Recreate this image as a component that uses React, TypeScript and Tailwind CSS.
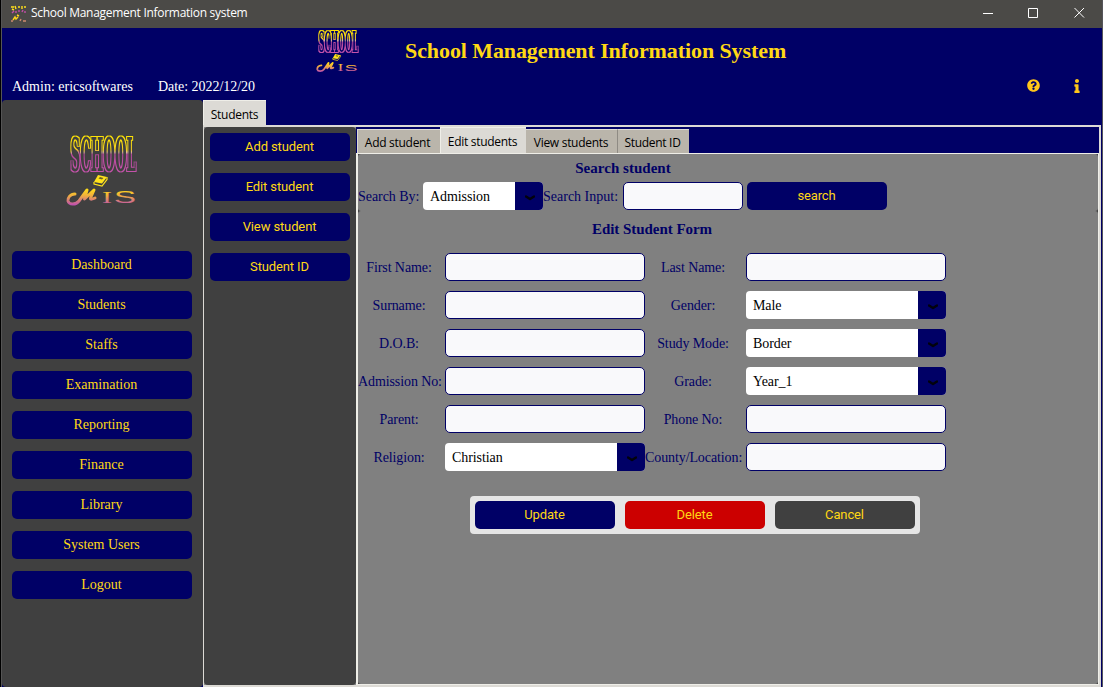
import { FaInfo, FaQuestionCircle } from 'react-icons/fa';

const menu = ['Dashboard', 'Students', 'Staffs', 'Examination', 'Reporting', 'Finance', 'Library', 'System Users', 'Logout'];
const studentActions = ['Add student', 'Edit student', 'View student', 'Student ID'];
const serif = "font-['Liberation_Serif',serif]";
const roboto = "font-['Roboto',sans-serif] text-[13px] tracking-[-0.12px]";
const sans = "font-['Open_Sans',sans-serif] text-[12px] tracking-[-0.29px]";

function Logo({ className, id, outline }: { className: string; id: string; outline: number }) {
  return (
    <svg viewBox="0 0 72 74" className={`overflow-visible ${className}`} aria-label="School MIS">
      <defs>
        <linearGradient id={`${id}-top`} gradientUnits="userSpaceOnUse" x1="0" y1="2" x2="0" y2="39">
          <stop offset="0" stopColor="#ffe600" />
          <stop offset="0.43" stopColor="#f5d020" />
          <stop offset="0.5" stopColor="#b8489c" />
          <stop offset="1" stopColor="#c553ab" />
        </linearGradient>
        <linearGradient id={`${id}-base`} gradientUnits="userSpaceOnUse" x1="0" y1="56" x2="0" y2="72">
          <stop offset="0" stopColor="#ffdf18" />
          <stop offset="0.4" stopColor="#f0b03c" />
          <stop offset="1" stopColor="#bf4fb0" />
        </linearGradient>
        <filter id={`${id}-outline`} x="-5%" y="-10%" width="110%" height="120%" colorInterpolationFilters="sRGB">
          <feMorphology in="SourceGraphic" operator="dilate" radius={outline} result="wide" />
          <feComposite in="wide" in2="SourceGraphic" operator="out" />
        </filter>
      </defs>
      <text x="4.500" y="38" fontSize="47" fontWeight="bold" fontFamily="DejaVu Serif, serif" textLength="65.500" lengthAdjust="spacingAndGlyphs" fill={`url(#${id}-top)`} filter={`url(#${id}-outline)`}>SCHOOL</text>
      <path d="M28 49 L32 42 L41 44 L36 50.500 Z" fill="#ffe31a" />
      <path d="M28 49 V51 L36 53 L41 46.500 V44" fill="none" stroke="#ffe31a" strokeWidth="1.2" />
      <path d="M32.500 45.500 L34 44 L37.500 45 L36 46.500Z" fill="#6d6420" />
      <path d="M9 61 C4 61 1.500 65 2 68 C3 72 10 72 13 68 L21 57 L18.500 66 L28 57 L24.500 65 C24 67 27 66 29 65" fill="none" stroke={`url(#${id}-base)`} strokeWidth="3" strokeLinecap="round" strokeLinejoin="round" />
      <text x="36" y="70" fontSize="17.500" fontFamily="Liberation Serif, serif" textLength="10" lengthAdjust="spacingAndGlyphs" fill={`url(#${id}-base)`}>I</text>
      <text x="48" y="70" fontSize="16.500" fontFamily="Liberation Sans, sans-serif" textLength="22" lengthAdjust="spacingAndGlyphs" fill={`url(#${id}-base)`}>S</text>
    </svg>
  );
}

function WindowIcon() {
  return (
    <svg viewBox="0 0 16 18" className="ml-2 h-[18px] w-4" fill="none" strokeWidth="1.4">
      <path d="M1 2 H4 M5 1 L6 4 M8 2 H10 M12 1 V4 M14 2 H16 M2 4 L4 5" stroke="#ffe01c" />
      <path d="M2 8 L4 6 M6 6 V8 M9 5 V7 M12 7 L13 5 M15 6 V8" stroke="#c14fa6" />
      <path d="M7 10 L9 11 M3 15 L5 12 L6 14 L8 12" stroke="#ffd51c" />
      <path d="M1 16 H3 M10 16 L11 14 M13 16 H16" stroke="#d08a70" />
    </svg>
  );
}

function Select({ value, width }: { value: string; width: string }) {
  return (
    <div className={`flex h-7 overflow-hidden rounded-[4px] bg-white ${width}`}>
      <span className="flex-1 pl-[7px] leading-[29px] tracking-[-0.08px] text-black">{value}</span>
      <span className="flex w-7 items-center justify-center bg-[#000066]">
        <svg viewBox="0 0 10 6" className="ml-px mt-[3px] h-1.5 w-2.5">
          <path d="M1 1.500 L5 4 L9 1.500" fill="none" stroke="#02020c" strokeWidth="2.4" strokeLinecap="round" strokeLinejoin="round" />
        </svg>
      </span>
    </div>
  );
}

function Input({ width }: { width: string }) {
  return <input className={`block h-7 rounded-[5px] border border-[#000066] bg-[#f9f9fb] px-2 outline-none ${width}`} />;
}

function Field({ label, value }: { label: string; value?: string }) {
  return (
    <>
      <label className="whitespace-nowrap pr-[5px] text-center leading-[29px] tracking-[-0.1px] text-[#000066]">{label}</label>
      {value ? <Select value={value} width="w-[200px]" /> : <Input width="w-[200px]" />}
    </>
  );
}

function NavButton({ label, className }: { label: string; className: string }) {
  return <button className={`block h-7 shrink-0 rounded-[5px] pb-px pr-px text-center leading-[27px] text-[#ffd814] ${className}`}>{label}</button>;
}

export default function App() {
  return (
    <div className={`flex h-[687px] w-[1103px] overflow-hidden border-r border-[#55555a] bg-[#000066] text-[14px] ${serif}`}>
      <div className="w-0.5 shrink-0 border-r border-[#555] bg-black" />
      <div className="flex min-w-0 flex-1 flex-col">
        <header className={`flex h-7 shrink-0 items-center bg-[#4b4a47] text-white ${sans}`}>
          <WindowIcon />
          <span className="ml-[5px] mt-[-2px] whitespace-nowrap">School Management Information system</span>
          <svg viewBox="0 0 102 12" className="ml-auto mr-[17px] mt-[-3px] h-3 w-[102px]" fill="none" stroke="white">
            <path d="M0 6.500 H10 M45.500 1.500 H54.500 V10.500 H45.500 Z M91.500 1 L101 10.500 M101 1 L91.500 10.500" />
          </svg>
        </header>
        <div className="flex h-[72px] shrink-0 flex-col">
          <div className="flex h-[46px] items-center">
            <Logo id="head" outline={1.65} className="ml-[314px] h-[44px] w-[43px]" />
            <h1 className="ml-[46px] mt-[-2px] whitespace-nowrap text-[22px] font-bold tracking-[-0.09px] text-[#ffd814]">School Management Information System</h1>
          </div>
          <div className="flex h-6 items-center pl-[10px] text-white">
            <span className="w-[146px] whitespace-nowrap">Admin: ericsoftwares</span>
            <span className="tracking-[-0.04px]">Date: 2022/12/20</span>
            <FaQuestionCircle className="mb-[2px] ml-auto size-[13px] text-[#ffc61a]" />
            <FaInfo className="mb-px ml-[30px] mr-[18px] h-[14px] w-[14px] text-[#ffc61a]" />
          </div>
        </div>
        <div className="flex min-h-0 flex-1">
          <aside className="flex w-[201px] shrink-0 flex-col items-center rounded-[4px] bg-[#404040] pr-px">
            <Logo id="side" outline={1} className="mt-[33px] h-[74px] w-[72px] shrink-0" />
            <nav className="mt-[44px] flex flex-col gap-3">
              {menu.map((m) => <NavButton key={m} label={m} className="w-[180px] bg-[#000066]" />)}
            </nav>
          </aside>
          <main className="flex min-w-0 flex-1 flex-col">
            <div className={`h-[25px] w-[63px] border-l border-t border-[#efeee8] bg-[#dcdad5] pr-px text-center leading-[27px] text-black ${sans}`}>Students</div>
            <div className="mr-px flex min-h-0 flex-1 border-2 border-l border-[#dcdad5] bg-[#000066]">
              <div className="flex w-[152px] shrink-0 bg-[#8a8a8a]">
                <div className={`flex flex-1 flex-col items-center gap-3 rounded-[4px] bg-[#404040] pt-[6px] ${roboto}`}>
                  {studentActions.map((a) => <NavButton key={a} label={a} className="w-[140px] bg-[#000066]" />)}
                </div>
              </div>
              <section className="flex min-w-0 flex-1 flex-col">
                <div className={`flex h-[26px] items-end pl-px text-center leading-[25px] text-black ${sans}`}>
                  <div className="h-6 w-[83px] border-l border-t border-[#dcdad5] bg-[#bab5ab] pr-[3px]">Add student</div>
                  <div className="h-[26px] w-[86px] border-l border-t border-[#efeee8] bg-[#dcdad5] pr-[2px] leading-[28px]">Edit students</div>
                  <div className="h-6 w-[91px] border-t border-[#dcdad5] bg-[#bab5ab] pr-px">View students</div>
                  <div className="h-6 w-[72px] border-l border-t border-[#dcdad5] border-l-[#8f8b84] bg-[#bab5ab] pr-[2px]">Student ID</div>
                </div>
                <div className="flex min-h-0 flex-1 flex-col border border-l-2 border-[#efeee8] bg-[#404040] text-[#000066]">
                  <div className="h-[57px] shrink-0 rounded-[3px] bg-[#808080] pt-1">
                    <h2 className="w-[530px] text-center text-[15px] font-bold leading-5 tracking-[0.03px]">Search student</h2>
                    <div className="mt-[4px] flex h-7 items-center">
                      <label className="w-[65px] whitespace-nowrap tracking-[-0.05px]">Search By:</label>
                      <Select value="Admission" width="w-[120px]" />
                      <label className="w-[80px] whitespace-nowrap">Search Input:</label>
                      <Input width="w-[120px]" />
                      <NavButton label="search" className={`ml-1 w-[140px] bg-[#000066] ${roboto}`} />
                    </div>
                  </div>
                  <div className="min-h-0 flex-1 rounded-[3px] bg-[#808080] pt-2">
                    <h2 className="w-[588px] text-center text-[15px] font-bold leading-5 tracking-[-0.05px]">Edit Student Form</h2>
                    <div className="mt-[14px] grid auto-rows-[28px] grid-cols-[87px_200px_101px_200px] gap-y-[10px]">
                      <Field label="First Name:" /><Field label="Last Name:" />
                      <Field label="Surname:" /><Field label="Gender:" value="Male" />
                      <Field label="D.O.B:" /><Field label="Study Mode:" value="Border" />
                      <Field label="Admission No:" /><Field label="Grade:" value="Year_1" />
                      <Field label="Parent:" /><Field label="Phone No:" />
                      <Field label="Religion:" value="Christian" /><Field label="County/Location:" />
                    </div>
                    <div className={`ml-[112px] mt-[25px] flex h-[38px] w-[450px] items-center gap-[10px] rounded-[4px] bg-[#e5e5e5] px-[5px] ${roboto}`}>
                      <NavButton label="Update" className="w-[140px] bg-[#000066]" />
                      <NavButton label="Delete" className="w-[140px] bg-[#cc0000]" />
                      <NavButton label="Cancel" className="w-[140px] bg-[#404040]" />
                    </div>
                  </div>
                </div>
              </section>
            </div>
          </main>
        </div>
      </div>
    </div>
  );
}
